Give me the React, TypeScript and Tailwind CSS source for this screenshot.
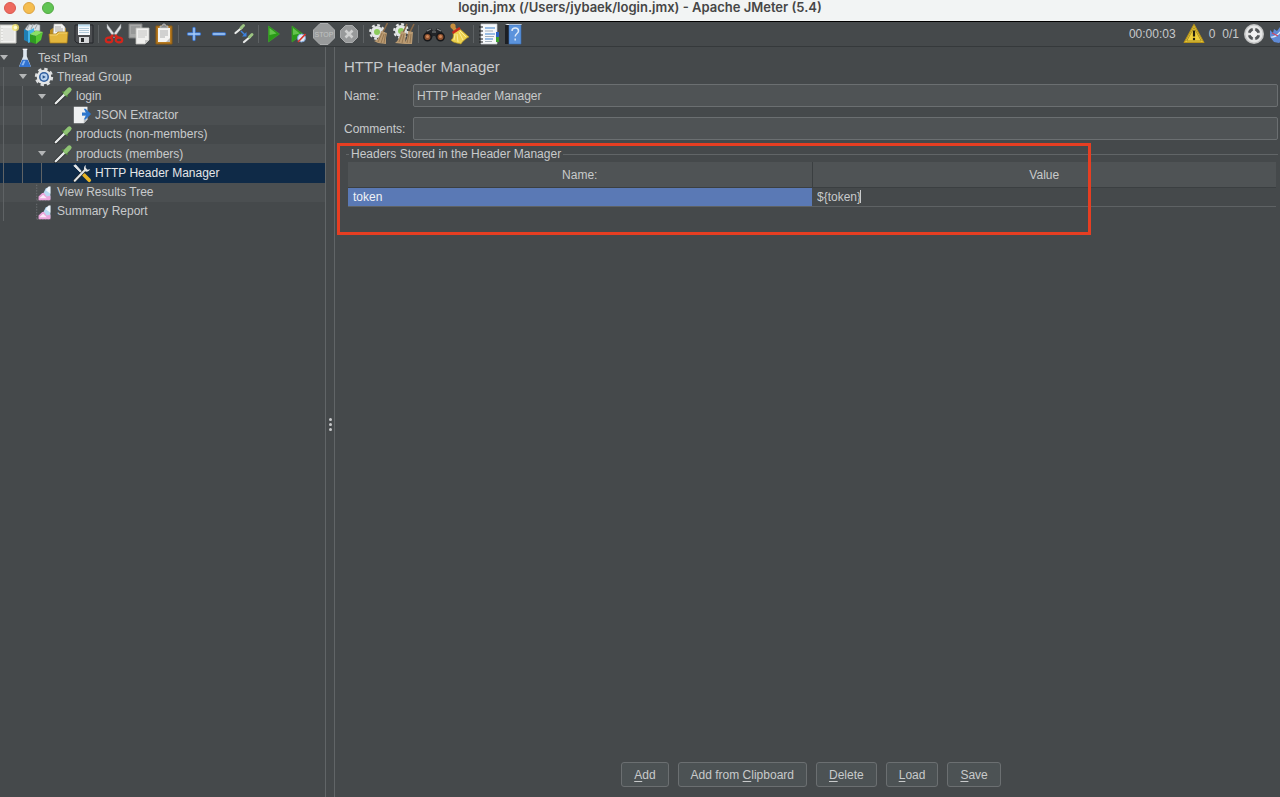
import { useState } from 'react'
import type { ReactNode } from 'react'

type IconProps = { children: ReactNode; className?: string }

function Svg({ children, className = 'h-[22px] w-[22px]' }: IconProps) {
  return (
    <svg viewBox="0 0 22 22" className={`shrink-0 ${className}`} aria-hidden="true">
      {children}
    </svg>
  )
}

// ── Toolbar icons ──

const NewIcon = () => (
  <Svg>
    <path d="M2 2h16v18H2z" fill="#f1f1ef" stroke="#c9c9c4" />
    <path d="M5 5h11v13H5z" fill="#e6e6e4" />
    <path d="M4 5v13" stroke="#c4c4c0" strokeDasharray="1 2" />
    <circle cx="17.500" cy="4.500" r="3.600" fill="#f3e36b" opacity=".8" />
    <circle cx="17.500" cy="4.500" r="1.800" fill="#fffbd0" />
  </Svg>
)

const TemplatesIcon = () => (
  <Svg>
    <path d="M2 6l3-4 2-1 1 1 2-1 1 1 2-1 4 1v6H3z" fill="#d9dde0" stroke="#7d858a" strokeWidth=".6" />
    <path d="M6 2L4 6M10 2L8 6M14 2l-2 4" stroke="#7d858a" strokeWidth=".7" />
    <path d="M1 6l4 2v11l-4-2z" fill="#1f7fb5" />
    <path d="M5 8l6-3v13l-6 2z" fill="#45b4e6" />
    <path d="M7 11l6 2v8l-6-2z" fill="#2f9c22" />
    <path d="M13 13l7-4-2 8-5 4z" fill="#55c833" />
    <path d="M7 11l6-3.500 7 1.500-7 4z" fill="#8be066" />
  </Svg>
)

const OpenIcon = () => (
  <Svg>
    <path d="M2 19V7l3-2h13v14z" fill="#b98a1e" />
    <path d="M6 1h8l3 3v9H5z" fill="#f4f4f2" stroke="#aaa" strokeWidth=".6" />
    <path d="M7 4h6M7 6h8M7 8h8" stroke="#9b9b9b" strokeWidth=".8" />
    <path d="M1 11h7l2-2h10l-1 11H2z" fill="#e3b63c" stroke="#a97d16" strokeWidth=".7" />
    <path d="M2 12h7l2-2h8" fill="none" stroke="#f7dc82" strokeWidth=".8" />
  </Svg>
)

const SaveIcon = () => (
  <Svg>
    <path d="M2 2h18v18H4l-2-2z" fill="#4b4d50" stroke="#25272a" />
    <path d="M5 1.500h12V12H5z" fill="#f5f8fb" />
    <path d="M5 1.500h12v2H5z" fill="#bfe0f2" />
    <path d="M6 5.500h10M6 7.500h10M6 9.500h10" stroke="#9fbccf" strokeWidth=".8" />
    <path d="M6 14h10v6H6z" fill="#d6d8da" />
    <path d="M8 15h3v4H8z" fill="#27292b" />
  </Svg>
)

const CutIcon = () => (
  <Svg>
    <path d="M4 1l9 12-2 2L4 5zM18 1L9 13l2 2 7-10z" fill="#dfe2e4" stroke="#8b8f92" strokeWidth=".5" />
    <path d="M10 12l-3 3M12 12l3 3" stroke="#d3261c" strokeWidth="2.600" />
    <ellipse cx="6" cy="17" rx="3.200" ry="2.400" fill="none" stroke="#d3261c" strokeWidth="2.200" />
    <ellipse cx="16" cy="17" rx="3.200" ry="2.400" fill="none" stroke="#d3261c" strokeWidth="2.200" />
  </Svg>
)

const CopyIcon = () => (
  <Svg>
    <path d="M1 1h13v14H1z" fill="#a8a9a8" stroke="#7d7e7e" />
    <path d="M3 4h9M3 6h9M3 8h5M3 10h5" stroke="#858686" strokeWidth=".9" />
    <path d="M8 5h13v12l-4 4H8z" fill="#f0f0ee" stroke="#bcbcb9" strokeWidth=".8" />
    <path d="M10 8h9M10 10h9M10 12h9M10 14h7" stroke="#c0c0be" strokeWidth=".9" />
    <path d="M21 17l-4 4v-4z" fill="#c9c9c7" />
  </Svg>
)

const PasteIcon = () => (
  <Svg>
    <path d="M3 3h16v18H3z" fill="#b87b20" stroke="#8a5a12" />
    <path d="M5 5h12v14H5z" fill="#f4f4f2" />
    <path d="M7 8h8M7 10h8M7 12h8M7 14h5" stroke="#a5a6a6" strokeWidth=".9" />
    <path d="M7 5V3h2l1-2h2l1 2h2v2z" fill="#8b8d8e" stroke="#d6d7d7" strokeWidth=".6" />
    <path d="M17 15v4h-4z" fill="#bdbdbb" />
  </Svg>
)

const PlusIcon = () => (
  <Svg>
    <path d="M11 5.500v11M5.500 11h11" stroke="#3f78cf" strokeWidth="3.400" strokeLinecap="round" />
    <path d="M11 5.500v11M5.500 11h11" stroke="#a9cdf7" strokeWidth="1.400" strokeLinecap="round" />
  </Svg>
)

const MinusIcon = () => (
  <Svg>
    <path d="M5.500 11h11" stroke="#3f78cf" strokeWidth="3.400" strokeLinecap="round" />
    <path d="M5.500 11h11" stroke="#a9cdf7" strokeWidth="1.400" strokeLinecap="round" />
  </Svg>
)

const ToggleIcon = () => (
  <Svg>
    <path d="M2.500 10l6-5" stroke="#e9ebea" strokeWidth="2.200" strokeLinecap="round" />
    <path d="M8 5l2.500-2.500" stroke="#9cc482" strokeWidth="3" strokeLinecap="round" />
    <path d="M11 19l6-5" stroke="#e9ebea" strokeWidth="2.200" strokeLinecap="round" />
    <path d="M16.500 14l2.500-2.500" stroke="#9cc482" strokeWidth="3" strokeLinecap="round" />
    <path d="M8 8l4 4" stroke="#3d82e0" strokeWidth="1.500" />
    <path d="M13.500 9v4.500H9z" fill="#3d82e0" />
  </Svg>
)

const StartIcon = () => (
  <Svg>
    <path d="M5.500 3l11 8-11 8z" fill="#2a9a18" stroke="#3e9c2c" strokeWidth=".8" />
    <path d="M6.500 5l7 5.500-7 1.500z" fill="#63c44b" />
  </Svg>
)

const StartNoPauseIcon = () => (
  <Svg>
    <path d="M4 3l11 8-11 8z" fill="#2a9a18" stroke="#3e9c2c" strokeWidth=".8" />
    <path d="M5 5l7 5.500L5 12z" fill="#63c44b" />
    <circle cx="13.500" cy="15" r="4" fill="#dfe9f5" stroke="#7aa0d4" />
    <path d="M10 19l7.500-8" stroke="#d8342a" strokeWidth="1.600" />
  </Svg>
)

const StopIcon = () => (
  <Svg>
    <path d="M7 .5h8L21.500 7v8L15 21.500H7L.5 15V7z" fill="#989a9b" stroke="#aaacad" />
    <text x="11" y="14" textAnchor="middle" fontSize="7" fontFamily="Liberation Sans, sans-serif" fill="#c0c2c2">
      STOP
    </text>
  </Svg>
)

const ShutdownIcon = () => (
  <Svg>
    <path d="M7.500 2.500h7l5 5v7l-5 5h-7l-5-5v-7z" fill="#989a9b" stroke="#a9abac" />
    <path d="M7.500 7.500l7 7M14.500 7.500l-7 7" stroke="#cfd0d0" strokeWidth="2.600" />
  </Svg>
)

function Gear({ cx, cy }: { cx: number; cy: number }) {
  return (
    <g>
      <circle cx={cx} cy={cy} r="6" fill="#e4e6e6" />
      <circle cx={cx} cy={cy} r="6.800" fill="none" stroke="#e4e6e6" strokeWidth="2.200" strokeDasharray="2.800 2.540" />
      <circle cx={cx} cy={cy} r="3" fill="#8ccb5c" />
    </g>
  )
}

const ClearIcon = () => (
  <Svg>
    <Gear cx={9} cy={9} />
    <path d="M19.500 0L15 9" stroke="#8a6a48" strokeWidth="1.600" />
    <path d="M13 8l6 2-1 5v6l-8-1-4-2c4-1 6-5 7-10z" fill="#b99a72" />
    <path d="M14 10l-4 9M16 11l-3 9M17.500 11l-1.500 9" stroke="#8b6d49" strokeWidth=".8" />
  </Svg>
)

const ClearAllIcon = () => (
  <Svg>
    <Gear cx={8} cy={8} />
    <path d="M14 1l-4 9M21 1l-4 8" stroke="#8a6a48" strokeWidth="1.600" />
    <path d="M8 8l5 2-1 11-10-1c3-2 5-6 6-12zM15 8l5 1-1 12h-8c2-3 4-7 4-13z" fill="#b99a72" />
    <path d="M9 11l-3 8M11 11l-2 9M16 11l-2 9M18 11l-1 9" stroke="#8b6d49" strokeWidth=".8" />
  </Svg>
)

const SearchIcon = () => (
  <Svg>
    <path d="M1 12l4-6 3-1 2 3h2l2-3 3 1 4 6v5h-7l-2-4h-2l-2 4H1z" fill="#222427" />
    <path d="M4 8l4-2M14 6l4 2M9 9h4" stroke="#83878a" strokeWidth="1.200" />
    <circle cx="4.500" cy="14" r="3.700" fill="#8e5230" stroke="#15171a" strokeWidth="1.500" />
    <circle cx="17.500" cy="14" r="3.700" fill="#8e5230" stroke="#15171a" strokeWidth="1.500" />
    <circle cx="4.500" cy="13.500" r="1.500" fill="#d08a5c" />
    <circle cx="17.500" cy="13.500" r="1.500" fill="#d08a5c" />
  </Svg>
)

const BroomIcon = () => (
  <Svg>
    <circle cx="5" cy="3" r="2.600" fill="#c98f3c" />
    <path d="M5 4l3 4" stroke="#c98f3c" strokeWidth="3.600" />
    <path d="M5 10l7-4 9 8c-3 1-7 5-8 7-5-1-9-2-10-4 2-1 3-4 2-7z" fill="#ecd14e" stroke="#b4921c" strokeWidth=".6" />
    <path d="M7 11l-1 6M9 11l1 8M11 9l4 8M12 8l6 6" stroke="#fbf0a0" strokeWidth=".9" />
    <path d="M4.500 10l7.500-5" stroke="#c62c1e" strokeWidth="2.600" />
  </Svg>
)

const FunctionHelperIcon = () => (
  <Svg>
    <path d="M3 1h16v20H3z" fill="#f6f8fa" stroke="#c7cbd0" strokeWidth=".7" />
    <path d="M7 5h10M7 11h10M7 16h8" stroke="#3b82cf" strokeWidth="1.100" />
    <path d="M7 8h8M7 13.500h9M7 18.500h7" stroke="#a5afb9" strokeWidth="1.100" />
    <path d="M1 4h4M1 8h4M1 12h4M1 16h4M1 19h4" stroke="#17191b" strokeWidth="1.100" />
    <path d="M18 9h3v5h-3z" fill="#2c63c4" />
    <path d="M18 14h3v5h-3z" fill="#3ba02e" />
  </Svg>
)

const HelpIcon = () => (
  <Svg>
    <path d="M2 2h4v19H2z" fill="#1c1f24" />
    <path d="M2 2l2-1h15l-1 1z" fill="#dfe4ea" />
    <path d="M6 2h12v19H6z" fill="#5b93dc" stroke="#3a6fb8" strokeWidth=".6" />
    <path
      d="M9 8c0-4 6.500-4 6.500 0 0 2.500-3.300 2.500-3.300 5.500M12.200 15.500v2"
      fill="none"
      stroke="#dce9f8"
      strokeWidth="1.500"
    />
  </Svg>
)

const WarningIcon = () => (
  <Svg>
    <path d="M11 1.500l9.800 18H1.200z" fill="#f0d03a" stroke="#b8941a" strokeWidth="1.200" strokeLinejoin="round" />
    <path d="M11 4.500l7.300 13.500H3.700z" fill="none" stroke="#8b7420" strokeWidth=".7" />
    <path d="M11 7.500v6" stroke="#23200f" strokeWidth="2.200" />
    <circle cx="11" cy="16" r="1.200" fill="#23200f" />
  </Svg>
)

const ExpandIcon = () => (
  <Svg>
    <circle cx="11" cy="11" r="10" fill="#c3c4c4" />
    <circle cx="11" cy="11" r="8.500" fill="#e6e7e7" />
    <path
      d="M5 9.500C5.500 7 7 5.500 9.500 5l.5 2.500L7.500 10zM17 9.500C16.500 7 15 5.500 12.500 5L12 7.500l2.500 2.500zM5 12.500c.5 2.500 2 4 4.500 4.500l.5-2.500L7.500 12zM17 12.500c-.5 2.500-2 4-4.500 4.500l-.5-2.500 2.500-2.500z"
      fill="#55585a"
    />
    <circle cx="11" cy="11" r="3" fill="#f3f3f3" />
  </Svg>
)

const FeatherIcon = () => (
  <Svg>
    <path d="M1 7l3 3 1-4 3 2 3-4h11l-6 12-6 4-5-1-4-5z" fill="#5f8ad6" />
    <path d="M2 14c5 1 9-4 13-10" fill="none" stroke="#dfe8f8" strokeWidth="1.200" />
    <path d="M3 10l6 3" stroke="#cf4460" strokeWidth="1.200" />
  </Svg>
)

// ── Tree icons ──

const FlaskIcon = () => (
  <Svg className="h-5 w-5">
    <path d="M9 1h4v8l4 10c.5 1.500 0 2-1.500 2h-9C5 21 4.500 20.500 5 19L9 9z" fill="#dde6ef" />
    <path d="M8 13h6l3 6.500c.3 1-.2 1.500-1.500 1.500h-9c-1.300 0-1.800-.5-1.500-1.500z" fill="#3272d0" />
    <path d="M9.500 14h2l-2 5h-2.500z" fill="#8ab8f2" />
    <path d="M8.500 1.500h5" stroke="#f4f6f8" strokeWidth="1.500" />
  </Svg>
)

const ThreadGroupIcon = () => (
  <Svg className="h-5 w-5">
    <circle cx="11" cy="11" r="8.500" fill="none" stroke="#dcdedf" strokeWidth="3.200" strokeDasharray="3.600 3.080" />
    <circle cx="11" cy="11" r="8" fill="#e4e6e7" />
    <circle cx="11" cy="11" r="5.500" fill="#315f9e" />
    <circle cx="11" cy="11" r="3.800" fill="#b9d2ee" />
    <path d="M9.500 9l3.500 2-3.500 2z" fill="#27528c" />
  </Svg>
)

const SamplerIcon = () => (
  <Svg className="h-5 w-5">
    <path d="M3 19l9-9" stroke="#26292a" strokeWidth="4.200" strokeLinecap="round" />
    <path d="M3 19l9-9" stroke="#e8eaea" strokeWidth="2.600" strokeLinecap="round" />
    <path d="M11 6.500l4.500 4.500" stroke="#4d7f3a" strokeWidth="2" strokeLinecap="round" />
    <path d="M14 8l4-4" stroke="#8fc474" strokeWidth="5" strokeLinecap="round" />
  </Svg>
)

const ExtractorIcon = () => (
  <Svg className="h-5 w-5">
    <path d="M2 2h15v14l-4 4H2z" fill="#eef0f1" />
    <path d="M17 16l-4 4v-4z" fill="#b8bcbf" />
    <path d="M11 10h6" stroke="#2d76cc" strokeWidth="3.500" />
    <path d="M13 4h2l6 6-6 6h-2l3-6z" fill="#2d76cc" />
  </Svg>
)

const ConfigIcon = () => (
  <Svg className="h-5 w-5">
    <path d="M2 3l2-1 8 9-1 1z" fill="#e6e8e9" stroke="#e6e8e9" />
    <path d="M13 13l6 6" stroke="#e9b526" strokeWidth="4" strokeLinecap="round" />
    <path d="M3 19.500L14 8" stroke="#24282b" strokeWidth="3.600" strokeLinecap="round" />
    <path d="M3 19.500L14 8" stroke="#e1e4e5" strokeWidth="2.200" strokeLinecap="round" />
    <path d="M15 2c-2 2-2.500 4.500-1 6.500S18.500 9.500 20 7l-3 .3-2-2z" fill="#e1e4e5" />
  </Svg>
)

const ListenerIcon = () => (
  <Svg className="h-5 w-5">
    <path d="M3 3v17M3 20h15" stroke="#6f7376" strokeDasharray="1.500 1.500" />
    <path d="M10 13l3-6 5-2v14h-8z" fill="#b9daf2" />
    <path d="M13 9l3-4h2v8z" fill="#f1f6fb" />
    <path d="M5 19v-3l4-4h2l3 4 4-1v5H5z" fill="#eba6dc" />
    <path d="M6 18l4-4 4 4z" fill="#fbe9f8" />
  </Svg>
)

// null = group separator
const TOOLS: ({ label: string; icon: ReactNode } | null)[] = [
  { label: 'New', icon: <NewIcon /> },
  { label: 'Templates', icon: <TemplatesIcon /> },
  { label: 'Open', icon: <OpenIcon /> },
  { label: 'Save', icon: <SaveIcon /> },
  null,
  { label: 'Cut', icon: <CutIcon /> },
  { label: 'Copy', icon: <CopyIcon /> },
  { label: 'Paste', icon: <PasteIcon /> },
  null,
  { label: 'Expand All', icon: <PlusIcon /> },
  { label: 'Collapse All', icon: <MinusIcon /> },
  { label: 'Toggle', icon: <ToggleIcon /> },
  null,
  { label: 'Start', icon: <StartIcon /> },
  { label: 'Start no pauses', icon: <StartNoPauseIcon /> },
  { label: 'Stop', icon: <StopIcon /> },
  { label: 'Shutdown', icon: <ShutdownIcon /> },
  null,
  { label: 'Clear', icon: <ClearIcon /> },
  { label: 'Clear All', icon: <ClearAllIcon /> },
  null,
  { label: 'Search', icon: <SearchIcon /> },
  { label: 'Reset Search', icon: <BroomIcon /> },
  null,
  { label: 'Function Helper', icon: <FunctionHelperIcon /> },
  { label: 'Help', icon: <HelpIcon /> },
]

const NODES = [
  { label: 'Test Plan', depth: 0, open: true, icon: <FlaskIcon /> },
  { label: 'Thread Group', depth: 1, open: true, icon: <ThreadGroupIcon /> },
  { label: 'login', depth: 2, open: true, icon: <SamplerIcon /> },
  { label: 'JSON Extractor', depth: 3, open: false, icon: <ExtractorIcon /> },
  { label: 'products (non-members)', depth: 2, open: false, icon: <SamplerIcon /> },
  { label: 'products (members)', depth: 2, open: true, icon: <SamplerIcon /> },
  { label: 'HTTP Header Manager', depth: 3, open: false, icon: <ConfigIcon /> },
  { label: 'View Results Tree', depth: 1, open: false, icon: <ListenerIcon /> },
  { label: 'Summary Report', depth: 1, open: false, icon: <ListenerIcon /> },
]

// [text before the mnemonic, mnemonic, rest]
const ACTIONS = [
  ['', 'A', 'dd'],
  ['Add from ', 'C', 'lipboard'],
  ['', 'D', 'elete'],
  ['', 'L', 'oad'],
  ['', 'S', 'ave'],
]

function TitleBar() {
  return (
    <header className="relative flex h-[22px] shrink-0 items-start justify-center border-b border-black bg-[#f2f4f4]">
      <div className="absolute top-[2px] left-1 flex gap-[7px]">
        <span className="size-3 rounded-full border border-[#d9584f] bg-[#ee6a5f]" />
        <span className="size-3 rounded-full border border-[#dca343] bg-[#f5bd4f]" />
        <span className="size-3 rounded-full border border-[#53a842] bg-[#61c454]" />
      </div>
      <h1 className="font-[Inter,sans-serif] text-[13px] leading-[15px] font-semibold text-[#464646]">
        login.jmx (/Users/jybaek/login.jmx) - Apache JMeter (5.4)
      </h1>
    </header>
  )
}

function Toolbar() {
  return (
    <div className="flex h-[25px] shrink-0 items-center overflow-hidden border-b border-[#35393b]">
      <div className="-ml-1 flex items-center">
        {TOOLS.map((tool, i) =>
          tool ? (
            <button key={tool.label} type="button" aria-label={tool.label} className="flex w-[25px] justify-center">
              {tool.icon}
            </button>
          ) : (
            <span key={i} className="flex w-[5px] justify-center">
              <span className="h-[18px] w-px bg-[#5d6163]" />
            </span>
          ),
        )}
      </div>
      <div className="ml-auto flex items-center">
        <span>00:00:03</span>
        <button type="button" aria-label="Show log" className="mr-1 ml-[7px]">
          <WarningIcon />
        </button>
        <span>0</span>
        <span className="mr-1 ml-[7px]">0/1</span>
        <ExpandIcon />
        <div className="ml-1 w-[11px] overflow-hidden">
          <FeatherIcon />
        </div>
      </div>
    </div>
  )
}

function Tree() {
  const [selected, setSelected] = useState('HTTP Header Manager')

  return (
    <nav className="w-[326px] shrink-0 border-r border-[#616567] pt-px">
      <ul className="grid h-[173px] grid-rows-9">
        {NODES.map((node) => (
          <li
            key={node.label}
            onClick={() => setSelected(node.label)}
            className={
              node.label === selected
                ? 'flex min-h-0 items-center bg-[#0f2a47] text-[#e4e6e8]'
                : 'flex min-h-0 items-center even:bg-[#4b4f51]'
            }
          >
            {Array.from({ length: node.depth }, (_, i) => (
              <span key={i} className="h-full w-[19px] shrink-0 pl-[3px]">
                <span className="block h-full w-px bg-[#5f6365]" />
              </span>
            ))}
            <span className="w-[15px] shrink-0">
              {node.open && (
                <svg viewBox="0 0 8 5" className="h-[5px] w-2" aria-hidden="true">
                  <path d="M0 0h8L4 5z" fill="#b4b6b7" />
                </svg>
              )}
            </span>
            {node.icon}
            <span className="ml-[3px] whitespace-nowrap">{node.label}</span>
          </li>
        ))}
      </ul>
    </nav>
  )
}

function HeaderTable() {
  const [value, setValue] = useState('${token}')

  return (
    <table className="w-full table-fixed border-collapse">
      <thead>
        <tr className="h-[25px] border-b border-[#3b3f41] bg-[#4f5355]">
          <th className="border-r border-[#3b3f41] px-0 pt-[2px] pb-0 font-normal">Name:</th>
          <th className="px-0 pt-[2px] pb-0 font-normal">Value</th>
        </tr>
      </thead>
      <tbody>
        <tr className="h-[19px] border-b border-[#5e6264]">
          <td className="bg-[#5a79b5] px-[5px] py-0 text-[#f0f2f5]">token</td>
          <td className="px-[5px] py-0">
            <div className="flex items-center">
              <input
                aria-label="Value"
                value={value}
                onChange={(e) => setValue(e.target.value)}
                className="field-sizing-content bg-transparent outline-none"
              />
              <span className="-ml-px h-[13px] w-px bg-[#c8cacb]" />
            </div>
          </td>
        </tr>
      </tbody>
    </table>
  )
}

function HeaderManager() {
  const inputClass =
    'h-[23px] min-w-0 flex-1 rounded-[2px] border border-[#6b6f71] bg-[#4f5355] px-[3px] outline-none'

  return (
    <main className="relative flex min-w-0 flex-1 flex-col pr-[2px] pl-[9px]">
      <h2 className="mt-[10px] text-[15px] leading-5">HTTP Header Manager</h2>

      <div className="mt-[7px] flex items-center">
        <label htmlFor="name" className="w-[69px]">
          Name:
        </label>
        <input id="name" defaultValue="HTTP Header Manager" className={inputClass} />
      </div>
      <div className="mt-[10px] flex items-center">
        <label htmlFor="comments" className="w-[69px]">
          Comments:
        </label>
        <input id="comments" className={inputClass} />
      </div>

      <section className="mt-[6px] flex-1 pr-[2px] pl-1">
        <div className="-mr-[2px] flex items-center gap-[2px]">
          <span className="-ml-[2px] h-px w-[3px] bg-[#616567]" />
          <h3 className="leading-4">Headers Stored in the Header Manager</h3>
          <span className="h-px flex-1 bg-[#616567]" />
        </div>
        <HeaderTable />
      </section>

      <div className="flex justify-center gap-[9px] pb-[10px]">
        {ACTIONS.map(([before, key, after]) => (
          <button
            key={before + key + after}
            type="button"
            className="h-[25px] rounded-[3px] border border-[#6b6f71] bg-[#4c5254] px-3"
          >
            {before}
            <span className="underline underline-offset-2">{key}</span>
            {after}
          </button>
        ))}
      </div>

      {/* highlight box around the headers table */}
      <div className="pointer-events-none absolute top-[96px] left-[2px] h-[92px] w-[754px] border-3 border-[#e63e22]" />
    </main>
  )
}

export default function App() {
  return (
    <div className="flex min-h-screen flex-col overflow-hidden bg-[#45494b] font-['Liberation_Sans',Arial,sans-serif] text-[12px] leading-4 text-[#c8cacb]">
      <TitleBar />
      <Toolbar />
      <div className="flex flex-1">
        <Tree />
        {/* split pane handle */}
        <div className="flex w-[9px] shrink-0 flex-col items-center justify-center gap-[2px] border-r border-[#616567] pt-1">
          <span className="size-[3px] rounded-full bg-[#c8cacb]" />
          <span className="size-[3px] rounded-full bg-[#c8cacb]" />
          <span className="size-[3px] rounded-full bg-[#c8cacb]" />
        </div>
        <HeaderManager />
      </div>
    </div>
  )
}
